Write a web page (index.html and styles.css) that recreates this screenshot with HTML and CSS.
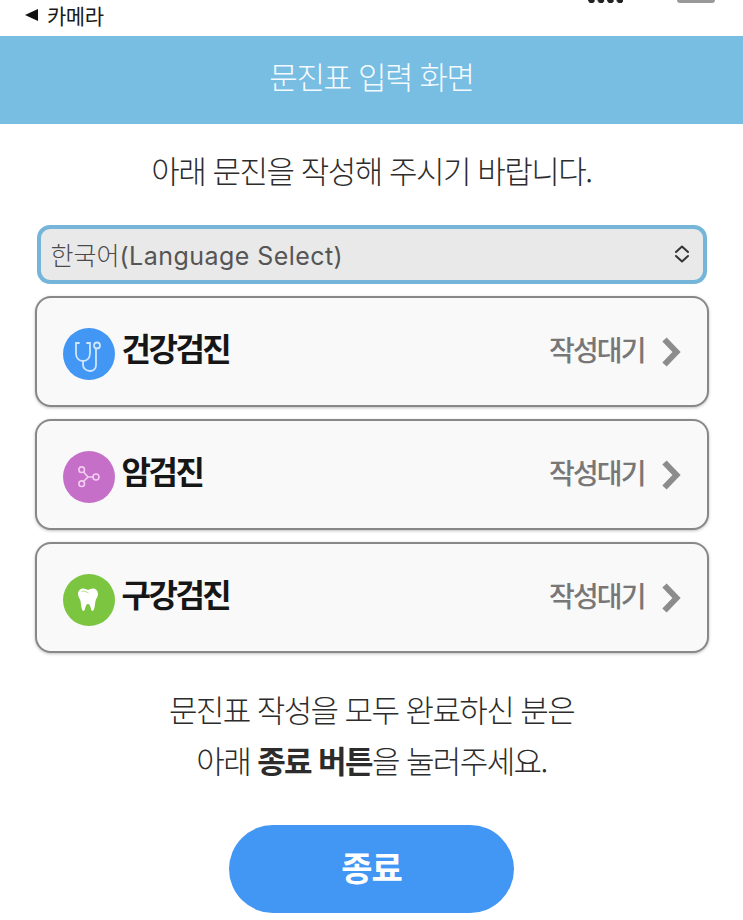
FILE: index.html
```html
<!DOCTYPE html>
<html lang="ko">
  <head>
    <meta charset="UTF-8" />
    <meta name="viewport" content="width=device-width, initial-scale=1.0" />
    <title>문진표 입력 화면</title>
    <link rel="stylesheet" href="styles.css">
  </head>
  <body>
    <div class="status-bar">
      <span class="back-link"><span class="back-arrow"></span>카메라</span>
      <span class="status-icons">
        <span class="signal"></span>
        <span class="battery"></span>
      </span>
    </div>
    <header class="title-bar">문진표 입력 화면</header>
    <main class="content">
      <p class="intro">아래 문진을 작성해 주시기 바랍니다.</p>

      <div class="lang-select">
        <span class="lang-text">한국어<span class="lang-name">(Language Select)</span></span>
        <svg class="updown" width="16" height="20" viewBox="0 0 16 20">
          <path d="M2 8 L8 2.5 L14 8 M2 12 L8 17.5 L14 12" fill="none" stroke="#333" stroke-width="2" stroke-linecap="round" stroke-linejoin="round"/>
        </svg>
      </div>

      <div class="card">
        <span class="badge badge-blue">
          <svg width="52" height="52" viewBox="0 0 52 52" fill="none" stroke="#cfe6ff" stroke-width="1.8" stroke-linecap="round">
            <path d="M16 15 H13 V25 C13 30 16 33 20 33 C24 33 27 30 27 25 V15 H24"/>
            <path d="M20 33 V37 C20 40 23 43 27 43 C31 43 33 40 33 37 V21"/>
            <circle cx="34" cy="17.5" r="3"/>
          </svg>
        </span>
        <span class="card-name">건강검진</span>
        <span class="card-state">작성대기</span>
        <svg class="chevron" width="20" height="32" viewBox="0 0 20 32">
          <path d="M3.5 3.5 L15.5 16 L3.5 28.5" fill="none" stroke="#8c8c8c" stroke-width="6"/>
        </svg>
      </div>

      <div class="card">
        <span class="badge badge-purple">
          <svg width="52" height="52" viewBox="0 0 52 52" fill="none" stroke="#f3cdf1" stroke-width="1.6">
            <circle cx="18.7" cy="18.7" r="2.8"/>
            <circle cx="18.7" cy="32.7" r="2.8"/>
            <circle cx="33" cy="26" r="3"/>
            <path d="M20.5 21 L25 26 L20.5 30.5 M25 26 H30"/>
          </svg>
        </span>
        <span class="card-name">암검진</span>
        <span class="card-state">작성대기</span>
        <svg class="chevron" width="20" height="32" viewBox="0 0 20 32">
          <path d="M3.5 3.5 L15.5 16 L3.5 28.5" fill="none" stroke="#8c8c8c" stroke-width="6"/>
        </svg>
      </div>

      <div class="card">
        <span class="badge badge-green">
          <svg width="52" height="52" viewBox="0 0 52 52">
            <path d="M20 14.5 C22 14.5 23.5 15.5 25 16 C26.5 15.5 28 14.5 30 14.5 C33 14.5 35 17 35 20 C35 23 33 24.5 32.5 27 C32 30 31.5 37 29.5 37 C27.5 37 28 30 25 30 C22 30 22.5 37 20.5 37 C18.5 37 18 30 17.5 27 C17 24.5 15 23 15 20 C15 17 17 14.5 20 14.5 Z" fill="#fff"/>
            <path d="M18.5 17.5 C21 16.8 23 17.5 25.5 19" fill="none" stroke="#b9e08f" stroke-width="1"/>
          </svg>
        </span>
        <span class="card-name">구강검진</span>
        <span class="card-state">작성대기</span>
        <svg class="chevron" width="20" height="32" viewBox="0 0 20 32">
          <path d="M3.5 3.5 L15.5 16 L3.5 28.5" fill="none" stroke="#8c8c8c" stroke-width="6"/>
        </svg>
      </div>

      <p class="notice">
        문진표 작성을 모두 완료하신 분은<br />
        아래 <b>종료 버튼</b>을 눌러주세요.
      </p>

      <button class="finish-btn">종료</button>
    </main>
  </body>
</html>
```

FILE: styles.css
```css
html,
body {
  height: 100%;
}
body {
  margin: 0;
  background-color: white;
  color: #333;
  font-family: "Noto Sans CJK KR", "Inter", sans-serif;
  overflow: hidden;
}
.status-bar {
  display: flex;
  justify-content: space-between;
  height: 36px;
  padding-left: 25px;
  padding-right: 28px;
  box-sizing: border-box;
  overflow: hidden;
}
.back-link {
  display: flex;
  align-items: center;
  gap: 9px;
  height: 29px;
  font-size: 21px;
  letter-spacing: -0.5px;
  color: #1a1a1a;
}
.back-arrow {
  width: 0;
  height: 0;
  border-top: 6px solid transparent;
  border-bottom: 6px solid transparent;
  border-right: 13px solid #111;
}
.status-icons {
  display: flex;
  gap: 54px;
  align-items: flex-start;
}
.signal {
  width: 35px;
  height: 3px;
  background: radial-gradient(circle at 3.5px 0, #222 3px, transparent 3.6px) 0 0 / 9.5px 3px repeat-x;
}
.battery {
  width: 38px;
  height: 3px;
  background-color: #999;
  border-radius: 0 0 4px 4px;
}
.title-bar {
  height: 88px;
  padding-bottom: 9px;
  box-sizing: border-box;
  display: flex;
  align-items: center;
  justify-content: center;
  background-color: #78bde2;
  color: #f4fbff;
  font-size: 31px;
  font-weight: 300;
  letter-spacing: -1.4px;
}
.content {
  display: flex;
  flex-direction: column;
  align-items: center;
  padding: 0 35px;
}
.intro {
  margin: 23px 0 33px;
  height: 45px;
  line-height: 45px;
  font-size: 31px;
  font-weight: 300;
  letter-spacing: -1.5px;
  color: #2c2c2c;
  white-space: nowrap;
}
.lang-select {
  width: 670px;
  height: 59px;
  box-sizing: border-box;
  margin-bottom: 12px;
  padding: 0 13px 2px 10px;
  display: flex;
  align-items: center;
  justify-content: space-between;
  background-color: #e9e9e9;
  border: 4px solid #74b5d9;
  border-radius: 13px;
  font-size: 25px;
  color: #4a4a4a;
}
.lang-text {
  font-weight: 300;
}
.lang-name {
  font-family: "Inter", sans-serif;
  font-weight: 400;
  letter-spacing: 0.45px;
  color: #555;
}
.card {
  width: 674px;
  height: 111px;
  box-sizing: border-box;
  margin-bottom: 12px;
  padding: 0 26px;
  display: flex;
  align-items: center;
  background-color: #f9f9f9;
  border: 2px solid #888;
  border-radius: 16px;
  box-shadow: 0 1px 3px rgba(0, 0, 0, 0.25);
}
.badge {
  width: 52px;
  height: 52px;
  margin-top: 4px;
  border-radius: 50%;
  display: flex;
  align-items: center;
  justify-content: center;
  flex-shrink: 0;
}
.badge-blue {
  background-color: #4296f4;
}
.badge-purple {
  background-color: #c56fc9;
}
.badge-green {
  background-color: #7bc540;
}
.card-name {
  flex: 1;
  margin-left: 7px;
  margin-top: -10px;
  font-size: 32px;
  font-weight: 700;
  letter-spacing: -2.5px;
  color: #161616;
}
.card-state {
  margin-top: -6px;
  font-size: 28px;
  font-weight: 500;
  letter-spacing: -1.9px;
  color: #777;
}
.chevron {
  margin-left: 16px;
}
.notice {
  margin: 18px 0 0;
  text-align: center;
  font-size: 31px;
  font-weight: 300;
  line-height: 51px;
  letter-spacing: -1.6px;
  color: #2c2c2c;
}
.notice b {
  font-weight: 700;
}
.finish-btn {
  width: 285px;
  height: 88px;
  margin-top: 40px;
  padding: 0 0 6px;
  border: none;
  border-radius: 44px;
  background-color: #4296f4;
  color: white;
  font-family: inherit;
  font-size: 34px;
  font-weight: 700;
  letter-spacing: -1px;
}
```
